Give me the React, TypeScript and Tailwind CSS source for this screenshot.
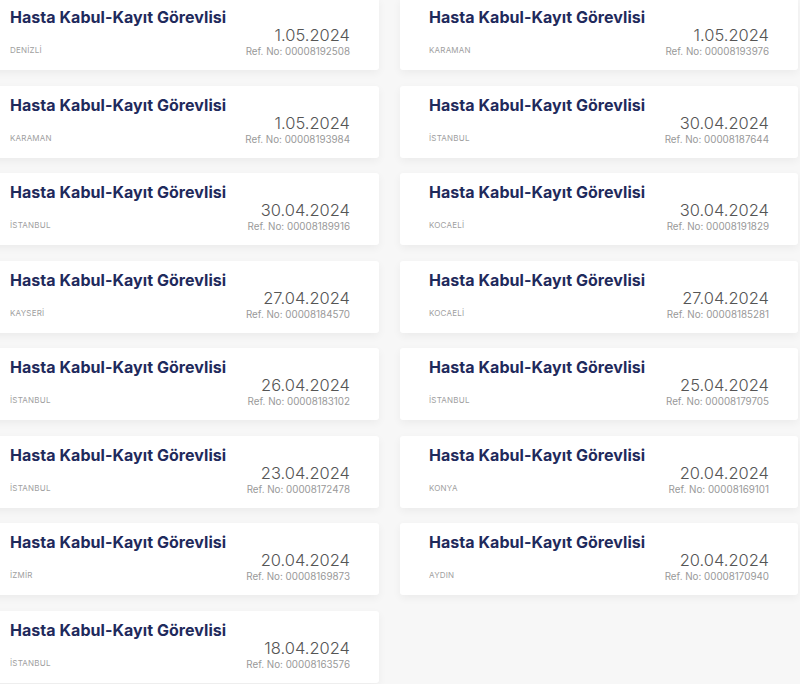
import React from "react";

type Job = { city: string; date: string; ref: string };

const jobs: Job[] = [
  { city: "DENİZLİ", date: "1.05.2024", ref: "00008192508" },
  { city: "KARAMAN", date: "1.05.2024", ref: "00008193976" },
  { city: "KARAMAN", date: "1.05.2024", ref: "00008193984" },
  { city: "İSTANBUL", date: "30.04.2024", ref: "00008187644" },
  { city: "İSTANBUL", date: "30.04.2024", ref: "00008189916" },
  { city: "KOCAELİ", date: "30.04.2024", ref: "00008191829" },
  { city: "KAYSERİ", date: "27.04.2024", ref: "00008184570" },
  { city: "KOCAELİ", date: "27.04.2024", ref: "00008185281" },
  { city: "İSTANBUL", date: "26.04.2024", ref: "00008183102" },
  { city: "İSTANBUL", date: "25.04.2024", ref: "00008179705" },
  { city: "İSTANBUL", date: "23.04.2024", ref: "00008172478" },
  { city: "KONYA", date: "20.04.2024", ref: "00008169101" },
  { city: "İZMİR", date: "20.04.2024", ref: "00008169873" },
  { city: "AYDIN", date: "20.04.2024", ref: "00008170940" },
  { city: "İSTANBUL", date: "18.04.2024", ref: "00008163576" },
];

function JobCard({ job }: { job: Job }) {
  return (
    <div className="h-[72px] bg-white rounded-[3px] shadow-[0_3px_8px_rgba(0,0,0,0.05)] pl-[29px] pr-[29px] pt-[9px]">
      <h3 className="text-[16px] leading-[20px] font-bold text-[#1f2a5c] tracking-[0.05px]">
        Hasta Kabul-Kayıt Görevlisi
      </h3>
      <div className="flex justify-between items-end -mt-[1px]">
        <span className="text-[8px] leading-[12px] text-[#a0a0a0] mb-[3px] tracking-[0.2px]">
          {job.city}
        </span>
        <div className="flex flex-col items-end">
          <span className="text-[16.5px] leading-[18px] font-light text-[#555]">{job.date}</span>
          <span className="text-[9.8px] leading-[14px] text-[#999] mt-[1px]">
            Ref. No: {job.ref}
          </span>
        </div>
      </div>
    </div>
  );
}

export default function App() {
  return (
    <div className="w-[800px] h-[684px] overflow-hidden bg-[#f7f7f7] font-['Inter',sans-serif]">
      <div className="-ml-[19px] -mt-[2px] w-[817px] grid grid-cols-2 gap-x-[21px] gap-y-[15.5px]">
        {jobs.map((job, i) => (
          <JobCard key={i} job={job} />
        ))}
      </div>
    </div>
  );
}
